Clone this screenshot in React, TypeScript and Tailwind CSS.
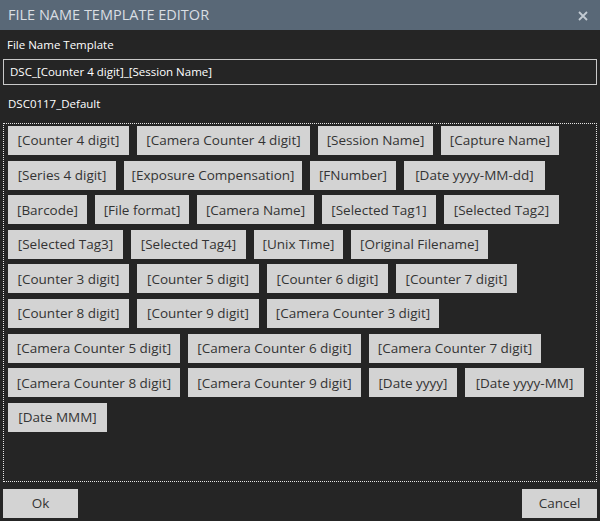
import React from "react";

const rows: { label: string; w: string }[][] = [
  [
    { label: "[Counter 4 digit]", w: "w-[121px]" },
    { label: "[Camera Counter 4 digit]", w: "w-[173px]" },
    { label: "[Session Name]", w: "w-[115px]" },
    { label: "[Capture Name]", w: "w-[118px]" },
  ],
  [
    { label: "[Series 4 digit]", w: "w-[108px]" },
    { label: "[Exposure Compensation]", w: "w-[178px]" },
    { label: "[FNumber]", w: "w-[86px]" },
    { label: "[Date yyyy-MM-dd]", w: "w-[141px]" },
  ],
  [
    { label: "[Barcode]", w: "w-[79px]" },
    { label: "[File format]", w: "w-[94px]" },
    { label: "[Camera Name]", w: "w-[117px]" },
    { label: "[Selected Tag1]", w: "w-[114px]" },
    { label: "[Selected Tag2]", w: "w-[115px]" },
  ],
  [
    { label: "[Selected Tag3]", w: "w-[115px]" },
    { label: "[Selected Tag4]", w: "w-[115px]" },
    { label: "[Unix Time]", w: "w-[89px]" },
    { label: "[Original Filename]", w: "w-[137px]" },
  ],
  [
    { label: "[Counter 3 digit]", w: "w-[121px]" },
    { label: "[Counter 5 digit]", w: "w-[122px]" },
    { label: "[Counter 6 digit]", w: "w-[121px]" },
    { label: "[Counter 7 digit]", w: "w-[121px]" },
  ],
  [
    { label: "[Counter 8 digit]", w: "w-[121px]" },
    { label: "[Counter 9 digit]", w: "w-[122px]" },
    { label: "[Camera Counter 3 digit]", w: "w-[172px]" },
  ],
  [
    { label: "[Camera Counter 5 digit]", w: "w-[172px]" },
    { label: "[Camera Counter 6 digit]", w: "w-[173px]" },
    { label: "[Camera Counter 7 digit]", w: "w-[172px]" },
  ],
  [
    { label: "[Camera Counter 8 digit]", w: "w-[172px]" },
    { label: "[Camera Counter 9 digit]", w: "w-[173px]" },
    { label: "[Date yyyy]", w: "w-[88px]" },
    { label: "[Date yyyy-MM]", w: "w-[119px]" },
  ],
  [{ label: "[Date MMM]", w: "w-[99px]" }],
];

const font = "font-['Segoe_UI','Open_Sans',sans-serif]";

export default function App() {
  return (
    <div className={`w-[600px] h-[521px] bg-[#252525] flex flex-col ${font}`}>
      {/* title bar */}
      <div className="h-[30px] bg-[#596877] flex items-center justify-between pl-[8px] pr-[12px]">
        <span className="text-[14.5px] text-[#d9dee3]">FILE NAME TEMPLATE EDITOR</span>
        <svg width="10" height="10" viewBox="0 0 10 10" className="mt-[1px]">
          <path d="M1 1 L9 9 M9 1 L1 9" stroke="#c3cbd3" strokeWidth="1.8" />
        </svg>
      </div>

      <div className="flex-1 flex flex-col px-[3px]">
        <div className="h-[29px] flex items-center pl-[4px] text-[11.5px] text-white">File Name Template</div>
        <div className="h-[26px] border border-[#c9c9c9] flex items-center pl-[6px] text-[11.5px] text-white">
          DSC_[Counter 4 digit]_[Session Name]
        </div>
        <div className="h-[38px] flex items-center pl-[5px] text-[11.5px] text-white">DSC0117_Default</div>

        <div className="h-[359px] border border-dotted border-[#e6e6e6] pt-[2px] pl-[4px] flex flex-col gap-y-[5.6px]">
          {rows.map((row, i) => (
            <div key={i} className="flex gap-x-2">
              {row.map((b) => (
                <button
                  key={b.label}
                  className={`${b.w} h-[29px] bg-[#d3d3d3] text-[#333333] text-[13.5px] whitespace-nowrap flex items-center justify-center`}
                >
                  {b.label}
                </button>
              ))}
            </div>
          ))}
        </div>

        <div className="flex justify-between pt-[7px]">
          <button className="w-[75px] h-[29px] bg-[#d3d3d3] text-[#333333] text-[13.5px]">Ok</button>
          <button className="w-[75px] h-[29px] bg-[#d3d3d3] text-[#333333] text-[13.5px]">Cancel</button>
        </div>
      </div>
    </div>
  );
}
